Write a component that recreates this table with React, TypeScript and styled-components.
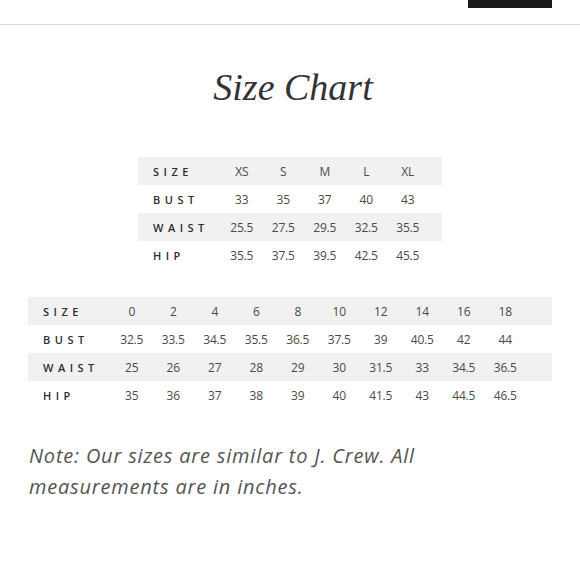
import styled, { createGlobalStyle } from "styled-components";

const GlobalStyle = createGlobalStyle`
	html, body {
		margin: 0;
		padding: 0;
		background: #ffffff;
	}
	body {
		font-family: "Open Sans", "Liberation Sans", sans-serif;
		color: #444444;
	}
`;

const Page = styled.div`
	width: 580px;
	height: 580px;
	overflow: hidden;
	display: flex;
	flex-direction: column;
`;

const Header = styled.header`
	height: 8px;
	border-bottom: 1px solid #dedede;
	display: flex;
	justify-content: flex-end;
	align-items: flex-end;
	padding: 0 28px 16px 0;
	box-sizing: content-box;
	overflow: hidden;
`;

const MenuButton = styled.div`
	width: 84px;
	height: 40px;
	background: #1b1b1b;
	flex-shrink: 0;
`;

const Title = styled.h1`
	margin: 40px 0 0;
	text-align: center;
	font-family: "Liberation Serif", "DejaVu Serif", serif;
	font-style: italic;
	font-weight: 400;
	font-size: 38px;
	line-height: 44px;
	color: #333333;
	padding-left: 6px;
`;

const Table = styled.div<{ $cols: number; $left: number; $trail: number }>`
	display: grid;
	grid-template-columns: 83px repeat(${(p) => p.$cols}, 41.5px) ${(p) => p.$trail}px;
	margin-left: ${(p) => p.$left}px;
	width: max-content;
`;

const Row = styled.div<{ $shade: boolean }>`
	display: contents;
	& > div {
		background: ${(p) => (p.$shade ? "#f1f1f1" : "#ffffff")};
	}
`;

const Label = styled.div`
	height: 28px;
	display: flex;
	align-items: center;
	padding-left: 15px;
	font-size: 11px;
	font-weight: 600;
	letter-spacing: 4.5px;
	color: #2e2e2e;
`;

const Cell = styled.div`
	height: 28px;
	display: flex;
	align-items: center;
	justify-content: center;
	font-size: 12px;
	letter-spacing: -0.2px;
	color: #4a4a4a;
`;

const Note = styled.p`
	margin: 31px 0 0 29px;
	width: 420px;
	font-style: italic;
	font-weight: 400;
	font-size: 20px;
	letter-spacing: 0.8px;
	line-height: 31px;
	color: #555555;
`;

type Chart = { label: string; values: string[] }[];

const small: Chart = [
	{ label: "SIZE", values: ["XS", "S", "M", "L", "XL"] },
	{ label: "BUST", values: ["33", "35", "37", "40", "43"] },
	{ label: "WAIST", values: ["25.5", "27.5", "29.5", "32.5", "35.5"] },
	{ label: "HIP", values: ["35.5", "37.5", "39.5", "42.5", "45.5"] },
];

const numeric: Chart = [
	{ label: "SIZE", values: ["0", "2", "4", "6", "8", "10", "12", "14", "16", "18"] },
	{ label: "BUST", values: ["32.5", "33.5", "34.5", "35.5", "36.5", "37.5", "39", "40.5", "42", "44"] },
	{ label: "WAIST", values: ["25", "26", "27", "28", "29", "30", "31.5", "33", "34.5", "36.5"] },
	{ label: "HIP", values: ["35", "36", "37", "38", "39", "40", "41.5", "43", "44.5", "46.5"] },
];

const TableWrap = styled.div<{ $top: number }>`
	margin-top: ${(p) => p.$top}px;
`;

function SizeTable({ rows, left, trail, top }: { rows: Chart; left: number; trail: number; top: number }): JSX.Element {
	return (
		<TableWrap $top={top}>
			<Table $cols={rows[0].values.length} $left={left} $trail={trail}>
				{rows.map((r, i) => (
					<Row key={r.label} $shade={i % 2 === 0}>
						<Label>{r.label}</Label>
						{r.values.map((v, j) => <Cell key={j}>{v}</Cell>)}
						<Cell />
					</Row>
				))}
			</Table>
		</TableWrap>
	);
}

export default function App(): JSX.Element {
	return (
		<Page>
			<GlobalStyle />
			<Header>
				<MenuButton />
			</Header>
			<Title>Size Chart</Title>
			<SizeTable rows={small} left={138} trail={13} top={48} />
			<SizeTable rows={numeric} left={28} trail={26} top={28} />
			<Note>Note: Our sizes are similar to J. Crew. All measurements are in inches.</Note>
		</Page>
	);
}
